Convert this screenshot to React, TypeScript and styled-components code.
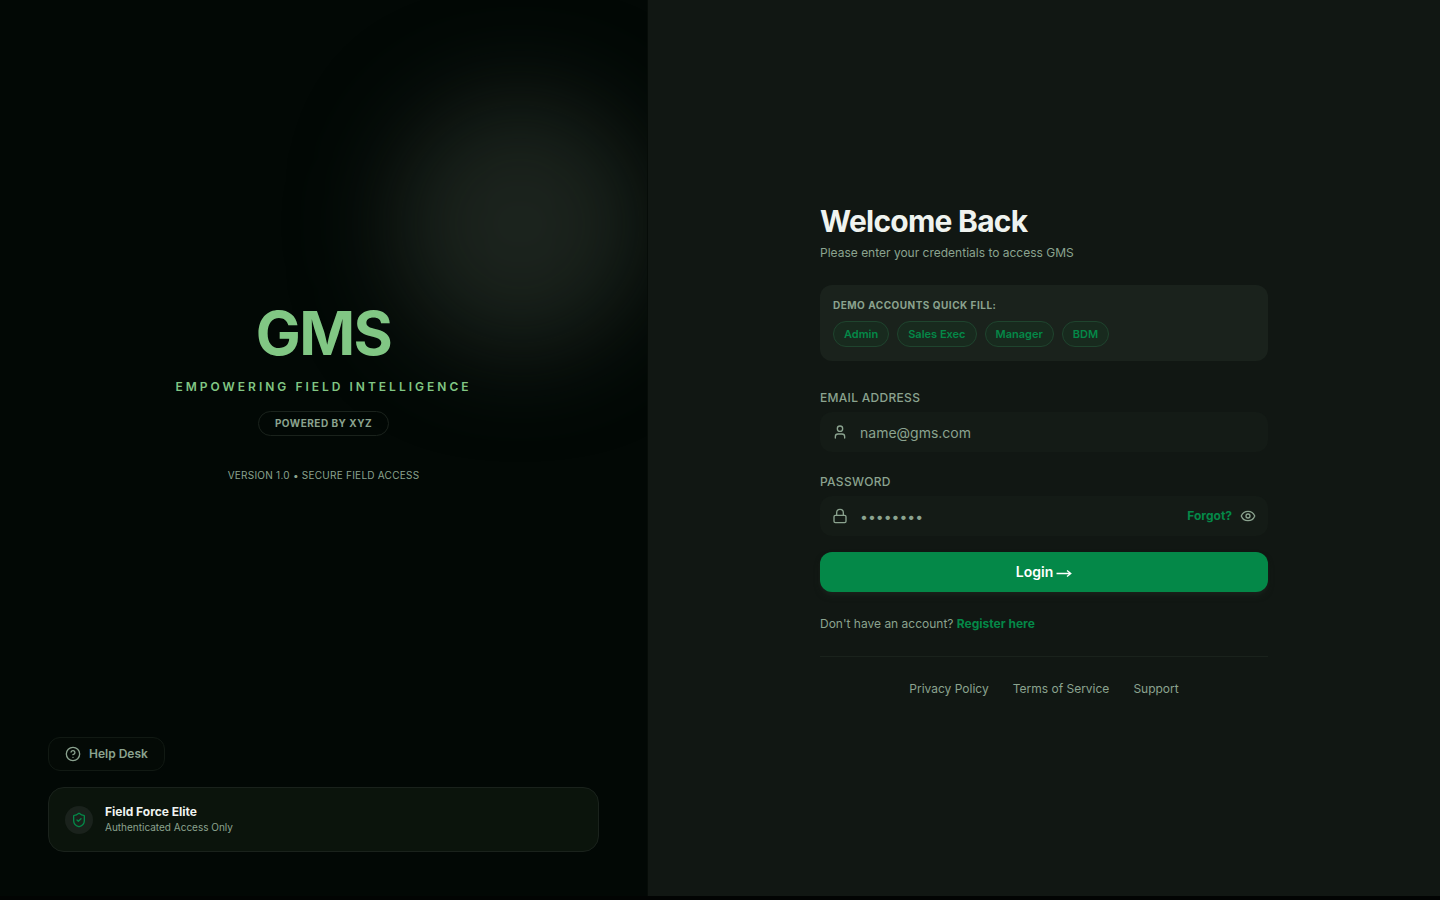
import React from "react";
import styled, { createGlobalStyle } from "styled-components";
import { CircleHelp, Eye, Lock, ShieldCheck, User } from "lucide-react";

const c = {
  ink: "#020805",
  surface: "#111713",
  raised: "#1a221c",
  line: "#1a221c",
  muted: "#8ba38f",
  green: "#048848",
  mint: "#81c784",
  text: "#eff3ef",
};

const GlobalStyle = createGlobalStyle`
  *, *::before, *::after { box-sizing: border-box; }
  body { margin: 0; background: #020403; font-family: Inter, "Liberation Sans", sans-serif; color: ${c.muted}; }
  button, input { font-family: inherit; }
  h1, h2, p { margin: 0; }
`;

const Page = styled.div`
  display: flex;
  height: 896px;
  background: ${c.surface};
`;

const BrandPanel = styled.aside`
  position: relative;
  overflow: hidden;
  display: flex;
  flex-direction: column;
  width: 45%;
  padding: 48px;
  background: ${c.ink};
  border-right: 1px solid #060c08;
`;

const Glow = styled.div`
  position: absolute;
  top: 96px;
  right: -1px;
  width: 256px;
  height: 256px;
  border-radius: 50%;
  background: #1b231d;
  filter: blur(48px);
`;

const Brand = styled.div`
  position: relative;
  flex: 1;
  display: flex;
  flex-direction: column;
  align-items: center;
  padding-top: 255px;
`;

const Logo = styled.h1`
  font-size: 60px;
  line-height: 60px;
  font-weight: 700;
  letter-spacing: -1.5px;
  color: ${c.mint};
`;

const Tagline = styled.p`
  margin-top: 16px;
  font-size: 12px;
  line-height: 16px;
  font-weight: 600;
  letter-spacing: 3px;
  color: ${c.mint};
`;

const PoweredBy = styled.span`
  margin-top: 16px;
  height: 25px;
  padding: 0 16px;
  border: 1px solid ${c.line};
  border-radius: 13px;
  font-size: 10px;
  line-height: 23px;
  font-weight: 700;
  letter-spacing: 0.5px;
`;

const Version = styled.p`
  margin-top: 32px;
  font-size: 10px;
  line-height: 15px;
  letter-spacing: 0.25px;
`;

const HelpButton = styled.button`
  position: relative;
  align-self: flex-start;
  display: flex;
  align-items: center;
  gap: 8px;
  height: 34px;
  padding: 0 16px;
  border: 1px solid #111913;
  border-radius: 12px;
  background: #040a06;
  color: ${c.muted};
  font-size: 12px;
  line-height: 16px;
  font-weight: 600;
`;

const HelpText = styled.span`
  line-height: 16px;
`;

const EliteCard = styled.div`
  display: flex;
  align-items: center;
  gap: 12px;
  height: 65px;
  margin-top: 16px;
  margin-bottom: -4px;
  padding: 0 16px;
  border: 1px solid ${c.line};
  border-radius: 16px;
  background: #0b140c;
`;

const Badge = styled.div`
  display: grid;
  place-items: center;
  width: 28px;
  height: 28px;
  border-radius: 50%;
  background: ${c.raised};
  color: ${c.green};
`;

const EliteTitle = styled.p`
  font-size: 12px;
  line-height: 16px;
  font-weight: 700;
  color: ${c.text};
`;

const EliteNote = styled.p`
  font-size: 10px;
  line-height: 15px;
`;

const FormPanel = styled.main`
  flex: 1;
  display: flex;
  justify-content: center;
  padding-top: 203px;
`;

const Form = styled.form`
  width: 448px;
  font-size: 12px;
  line-height: 16px;
`;

const Title = styled.h2`
  font-size: 30px;
  line-height: 36px;
  font-weight: 700;
  letter-spacing: -0.75px;
  color: ${c.text};
`;

const Subtitle = styled.p`
  margin-top: 6px;
`;

const DemoCard = styled.section`
  margin-top: 24px;
  height: 76px;
  padding: 13px;
  border-radius: 12px;
  background: ${c.raised};
`;

const DemoLabel = styled.p`
  font-size: 10px;
  line-height: 15px;
  font-weight: 700;
  letter-spacing: 0.5px;
`;

const Chips = styled.div`
  display: flex;
  gap: 8px;
  margin-top: 8px;
`;

const Chip = styled.button`
  height: 26px;
  padding: 0 10px;
  border: 1px solid #1f442e;
  border-radius: 13px;
  background: #182a1e;
  color: ${c.green};
  font-size: 11px;
  line-height: 16px;
  font-weight: 600;
`;

const Field = styled.div<{ $top: number }>`
  margin-top: ${(p) => p.$top}px;
`;

const FieldLabel = styled.label`
  display: block;
  font-weight: 500;
  letter-spacing: 0.3px;
`;

const InputBox = styled.div`
  display: flex;
  align-items: center;
  height: 40px;
  margin-top: 6px;
  padding: 0 12px;
  border-radius: 12px;
  background: #141b16;
`;

const Input = styled.input`
  flex: 1;
  min-width: 0;
  height: 20px;
  margin-left: 12px;
  padding: 0;
  border: 0;
  outline: 0;
  background: transparent;
  color: ${c.text};
  font-size: 14px;
  &::placeholder { color: ${c.muted}; opacity: 1; }
`;

const GreenLink = styled.a`
  font-weight: 700;
  color: ${c.green};
`;

const EyeIcon = styled(Eye)`
  margin-left: 8px;
`;

const LoginButton = styled.button`
  display: flex;
  align-items: center;
  justify-content: center;
  gap: 3px;
  width: 100%;
  height: 40px;
  margin-top: 16px;
  padding: 0;
  border: 0;
  border-radius: 12px;
  background: ${c.green};
  box-shadow: 0 4px 6px -1px #1a221c, 0 2px 4px -2px #1a221c;
  color: #fff;
  font-size: 14px;
  line-height: 20px;
  font-weight: 600;
`;

const Arrow = styled.svg`
  display: block;
  width: 16px;
  height: 8px;
  margin-top: 2px;
  fill: none;
  stroke: currentColor;
  stroke-width: 1.3;
`;

const Register = styled.p`
  margin-top: 24px;
`;

const Links = styled.nav`
  display: flex;
  justify-content: center;
  gap: 24px;
  margin-top: 24px;
  padding-top: 24px;
  border-top: 1px solid ${c.line};
`;

export default function App() {
  return (
    <>
      <GlobalStyle />
      <Page>
        <BrandPanel>
          <Glow />
          <Brand>
            <Logo>GMS</Logo>
            <Tagline>EMPOWERING FIELD INTELLIGENCE</Tagline>
            <PoweredBy>POWERED BY XYZ</PoweredBy>
            <Version>VERSION 1.0 • SECURE FIELD ACCESS</Version>
          </Brand>
          <HelpButton>
            <CircleHelp size={16} />
            <HelpText>Help Desk</HelpText>
          </HelpButton>
          <EliteCard>
            <Badge>
              <ShieldCheck size={16} />
            </Badge>
            <div>
              <EliteTitle>Field Force Elite</EliteTitle>
              <EliteNote>Authenticated Access Only</EliteNote>
            </div>
          </EliteCard>
        </BrandPanel>
        <FormPanel>
          <Form onSubmit={(e) => e.preventDefault()}>
            <Title>Welcome Back</Title>
            <Subtitle>Please enter your credentials to access GMS</Subtitle>
            <DemoCard>
              <DemoLabel>DEMO ACCOUNTS QUICK FILL:</DemoLabel>
              <Chips>
                {["Admin", "Sales Exec", "Manager", "BDM"].map((role) => (
                  <Chip key={role} type="button">{role}</Chip>
                ))}
              </Chips>
            </DemoCard>
            <Field $top={29}>
              <FieldLabel htmlFor="email">EMAIL ADDRESS</FieldLabel>
              <InputBox>
                <User size={16} />
                <Input id="email" placeholder="name@gms.com" />
              </InputBox>
            </Field>
            <Field $top={22}>
              <FieldLabel htmlFor="password">PASSWORD</FieldLabel>
              <InputBox>
                <Lock size={16} />
                <Input id="password" type="password" placeholder="••••••••" />
                <GreenLink>Forgot?</GreenLink>
                <EyeIcon size={16} />
              </InputBox>
            </Field>
            <LoginButton>
              Login
              <Arrow viewBox="0 0 16 8" aria-hidden="true">
                <path d="M0.5 4.5H14.5M11 1.5L14.8 4.5L11 7.5" />
              </Arrow>
            </LoginButton>
            <Register>
              Don't have an account? <GreenLink>Register here</GreenLink>
            </Register>
            <Links>
              <a>Privacy Policy</a>
              <a>Terms of Service</a>
              <a>Support</a>
            </Links>
          </Form>
        </FormPanel>
      </Page>
    </>
  );
}
